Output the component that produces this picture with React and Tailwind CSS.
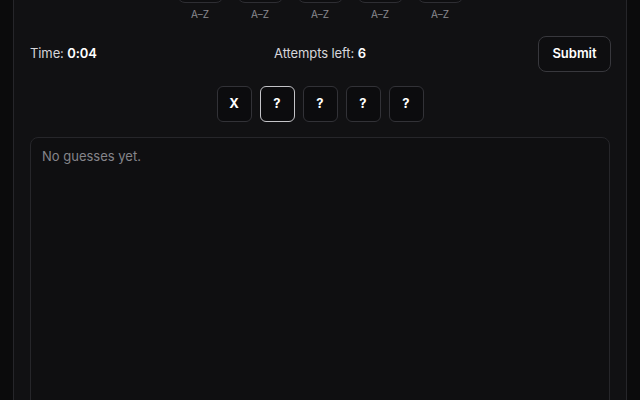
import React from "react";

const slots = ["A", "B", "C", "D", "E"];
const tiles = ["X", "?", "?", "?", "?"];

export default function App() {
  return (
    <div
      className="h-[400px] overflow-hidden bg-[#0b0b0c] text-white"
      style={{ fontFamily: "Inter, 'Noto Sans', sans-serif" }}
    >
      <div className="mx-[13px] h-[460px] -mt-[45px] border-x border-[#26262a] bg-[#111113] px-4">
        {/* letter slots */}
        <div className="flex justify-center gap-[13px]">
          {slots.map((s) => (
            <div key={s} className="flex flex-col items-center">
              <div className="h-12 w-[47px] rounded-lg border border-[#2e2e33] bg-[#0e0e10]" />
              <div className="mt-[5px] text-[10px] leading-[12px] text-[#8a8a90]">A–Z</div>
            </div>
          ))}
        </div>

        <div className="mt-4 flex items-center justify-between">
          <div className="flex-1 text-[13px] tracking-[-0.1px] text-[#d6d6da]">
            Time: <span className="font-semibold text-white">0:04</span>
          </div>
          <div className="text-[13px] tracking-[-0.1px] text-[#d6d6da]">
            Attempts left: <span className="font-semibold text-white">6</span>
          </div>
          <div className="flex flex-1 justify-end">
            <button className="mr-[-1px] h-9 w-[73px] rounded-lg border border-[#38383d] bg-[#0e0e10] text-[13px] font-semibold text-white">
              Submit
            </button>
          </div>
        </div>

        <div className="mt-3.5 flex justify-center gap-2">
          {tiles.map((t, i) => (
            <div
              key={i}
              className={`flex h-9 w-[35px] items-center justify-center rounded-md border bg-[#0c0c0e] text-[13px] font-bold ${
                i === 1 ? "border-[#c4c4c8]" : "border-[#323237]"
              }`}
            >
              {t}
            </div>
          ))}
        </div>

        <div className="mt-[15px] h-[300px] rounded-lg border border-[#26262a] bg-[#0f0f11] px-[11px] py-[9px] text-[13px] text-[#85858b]">
          No guesses yet.
        </div>
      </div>
    </div>
  );
}
